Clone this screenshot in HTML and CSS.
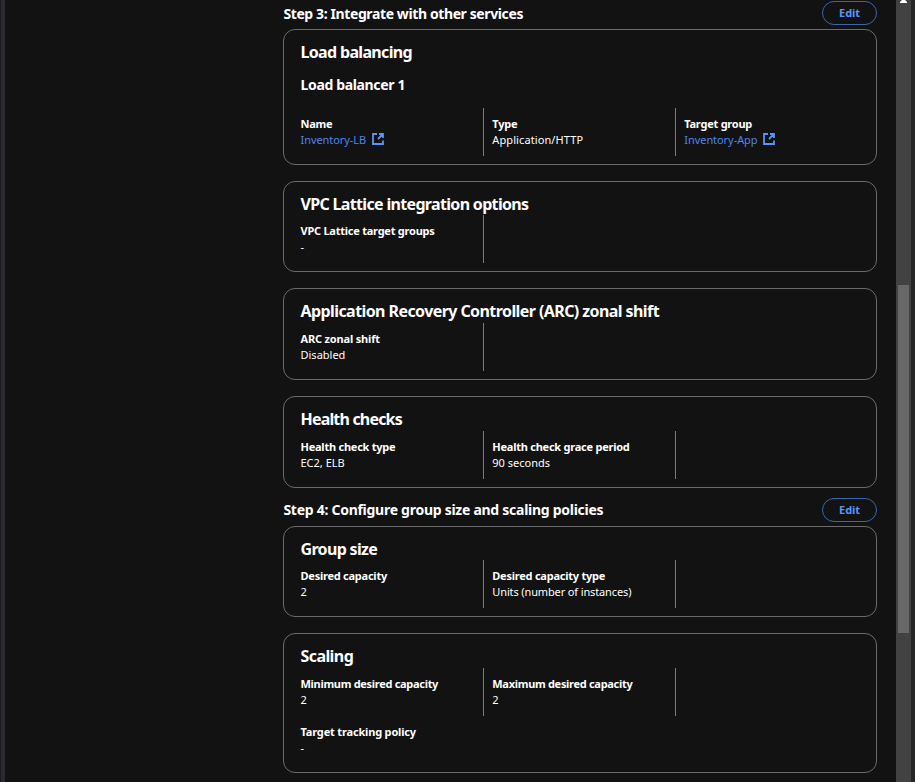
FILE: index.html
```html
<!DOCTYPE html>
<html lang="en"><head><meta charset="utf-8"><title>Review</title><link rel="stylesheet" href="styles.css"></head>
<body>
<div class="rail"></div>
<main>
<div class="step"><h2>Step 3: Integrate with other services</h2><button>Edit</button></div>
<section class="card lb"><h3>Load balancing</h3><h4>Load balancer 1</h4>
<div class="cols"><dl><dt>Name</dt><dd class="link">Inventory-LB<svg viewBox="0 0 12 12"><path d="M5 1H1v10h10V7.500M7 1h4v4M11 1 6 6"/></svg></dd></dl><dl><dt>Type</dt><dd class="wide">Application/HTTP</dd></dl><dl><dt>Target group</dt><dd class="link">Inventory-App<svg viewBox="0 0 12 12"><path d="M5 1H1v10h10V7.500M7 1h4v4M11 1 6 6"/></svg></dd></dl></div></section>
<section class="card vpc"><h3>VPC Lattice integration options</h3><div class="cols"><dl><dt>VPC Lattice target groups</dt><dd>-</dd></dl><dl></dl></div></section>
<section class="card arc"><h3>Application Recovery Controller (ARC) zonal shift</h3><div class="cols"><dl><dt>ARC zonal shift</dt><dd>Disabled</dd></dl><dl></dl></div></section>
<section class="card health"><h3>Health checks</h3><div class="cols"><dl><dt>Health check type</dt><dd>EC2, ELB</dd></dl><dl><dt>Health check grace period</dt><dd>90 seconds</dd></dl><dl></dl></div></section>
<div class="step second"><h2>Step 4: Configure group size and scaling policies</h2><button>Edit</button></div>
<section class="card group"><h3>Group size</h3><div class="cols"><dl><dt>Desired capacity</dt><dd>2</dd></dl><dl><dt>Desired capacity type</dt><dd class="tight">Units (number of instances)</dd></dl><dl></dl></div></section>
<section class="card scaling"><h3>Scaling</h3><div class="cols"><dl><dt>Minimum desired capacity</dt><dd>2</dd></dl><dl><dt>Maximum desired capacity</dt><dd>2</dd></dl><dl></dl></div><dl class="policy"><dt>Target tracking policy</dt><dd>-</dd></dl></section>
</main>
<div class="scrollbar"><i class="arrow"></i><i class="thumb"></i></div>
</body></html>
```
FILE: styles.css
```css
*{box-sizing:border-box}
body{margin:0;height:782px;overflow:hidden;display:flex;background:#121212;color:#fff;font:11px/16px "Noto Sans",sans-serif}
h2,h3,h4,dl,dd{margin:0}
.rail{width:5px;background:#2b2b2d;border-left:1px solid #1a1a22}
main{width:594px;margin-left:278px}
.step{display:flex;justify-content:space-between;height:29px;padding-top:1px}
.step.second{height:38px;padding-top:10px}
h2{font-size:14px;line-height:24px;font-weight:700;letter-spacing:-.27px;padding-left:.4px}
.step:not(.second) h2{line-height:26px;letter-spacing:-.39px}
button{width:55px;height:24px;border:1px solid #3a66b0;border-radius:12px;background:none;color:#5b94f9;font:700 11px/20px "Noto Sans",sans-serif;padding:0;letter-spacing:-.1px}
.card{border:1px solid #6b6b6d;border-radius:12px;padding:12px 16px 12px 16.5px;height:91px;margin-bottom:17px}
.card.lb{height:136px;margin-bottom:16px}
.card.vpc{margin-bottom:16px}
.card.health{height:92px;margin-bottom:0}
.card.arc{height:92px;margin-bottom:16px}
.card.group{margin-bottom:16px}
.card.scaling{height:140px}
h3{font-size:16px;line-height:20px;font-weight:700;letter-spacing:-.67px}
.scaling h3,.arc h3{letter-spacing:-.58px}
.health h3{letter-spacing:-.82px}
h4{font-size:14px;line-height:20px;font-weight:700;margin-top:13px;letter-spacing:-.35px}
.cols{display:grid;grid-template-columns:182.5px 192px 1fr;height:48px;margin-top:1px}
.arc .cols,.health .cols,.scaling .cols{margin-top:2px}
.lb .cols{margin-top:13px}
.cols dl+dl{border-left:1px solid #7a7a7c;padding-left:8.3px}
dt{font-weight:700;letter-spacing:-.24px}
.scaling .cols dt{letter-spacing:-.3px}
.arc dt,.policy dt{letter-spacing:-.17px}
.cols dt{margin-top:8px}
.wide{letter-spacing:.1px}
.tight{letter-spacing:-.13px}
.link{color:#4d86ed;letter-spacing:-.06px}
svg{width:12px;height:12px;margin-left:5.7px;vertical-align:-1px;fill:none;stroke:#5b94f9;stroke-width:1.8}
.policy{margin-top:8px}
.scrollbar{width:19px;margin-left:auto;border-right:4px solid #262626;background:#424242;display:flex;flex-direction:column;align-items:center}
.thumb{width:11px;height:348px;margin-top:282px;background:#686868}
.arrow{width:7px;height:3px;background:#fff;clip-path:polygon(28% 0,72% 0,100% 70%,100% 100%,0 100%,0 70%)}
```
